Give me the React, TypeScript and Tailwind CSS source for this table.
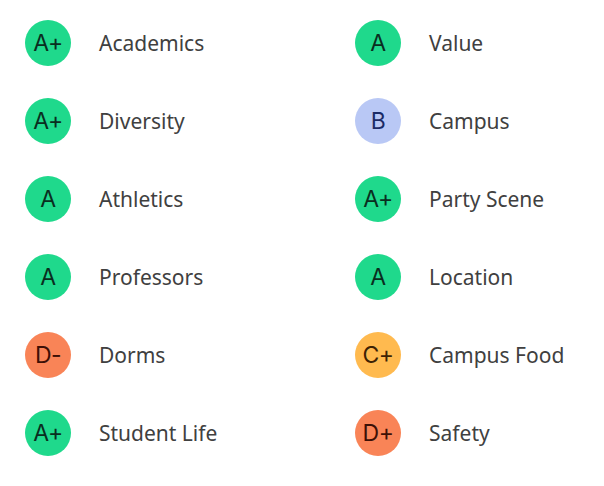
const grades = [
  { label: "Academics", grade: "A+", tone: "green" },
  { label: "Value", grade: "A", tone: "green" },
  { label: "Diversity", grade: "A+", tone: "green" },
  { label: "Campus", grade: "B", tone: "blue" },
  { label: "Athletics", grade: "A", tone: "green" },
  { label: "Party Scene", grade: "A+", tone: "green" },
  { label: "Professors", grade: "A", tone: "green" },
  { label: "Location", grade: "A", tone: "green" },
  { label: "Dorms", grade: "D-", tone: "orange" },
  { label: "Campus Food", grade: "C+", tone: "yellow" },
  { label: "Student Life", grade: "A+", tone: "green" },
  { label: "Safety", grade: "D+", tone: "orange" },
];

const toneClass: Record<string, string> = {
  green: "bg-[#1fd98c] text-[#0a2e1f]",
  blue: "bg-[#b9c8f5] text-[#1b2b66]",
  orange: "bg-[#f98457] text-[#3d1006]",
  yellow: "bg-[#ffba4f] text-[#3d2204]",
};

const GradeBadge = ({ grade, tone }: { grade: string; tone: string }) => (
  <div
    className={`flex h-[46px] w-[46px] shrink-0 items-center justify-center rounded-full text-[23px] tracking-[-0.5px] ${toneClass[tone]}`}
    style={{ fontFamily: "Inter, sans-serif" }}
  >
    {grade}
  </div>
);

export default function App() {
  return (
    <div className="min-h-[486px] w-[604px] bg-white pl-[25px] pt-[20px]">
      <div className="grid grid-cols-[330px_1fr] gap-y-[32px]">
        {grades.map((g) => (
          <div key={g.label} className="flex h-[46px] items-center gap-[28px]">
            <GradeBadge grade={g.grade} tone={g.tone} />
            <span
              className="mt-[2px] text-[21px] text-[#404040]"
              style={{ fontFamily: "'Noto Sans', sans-serif" }}
            >
              {g.label}
            </span>
          </div>
        ))}
      </div>
    </div>
  );
}
